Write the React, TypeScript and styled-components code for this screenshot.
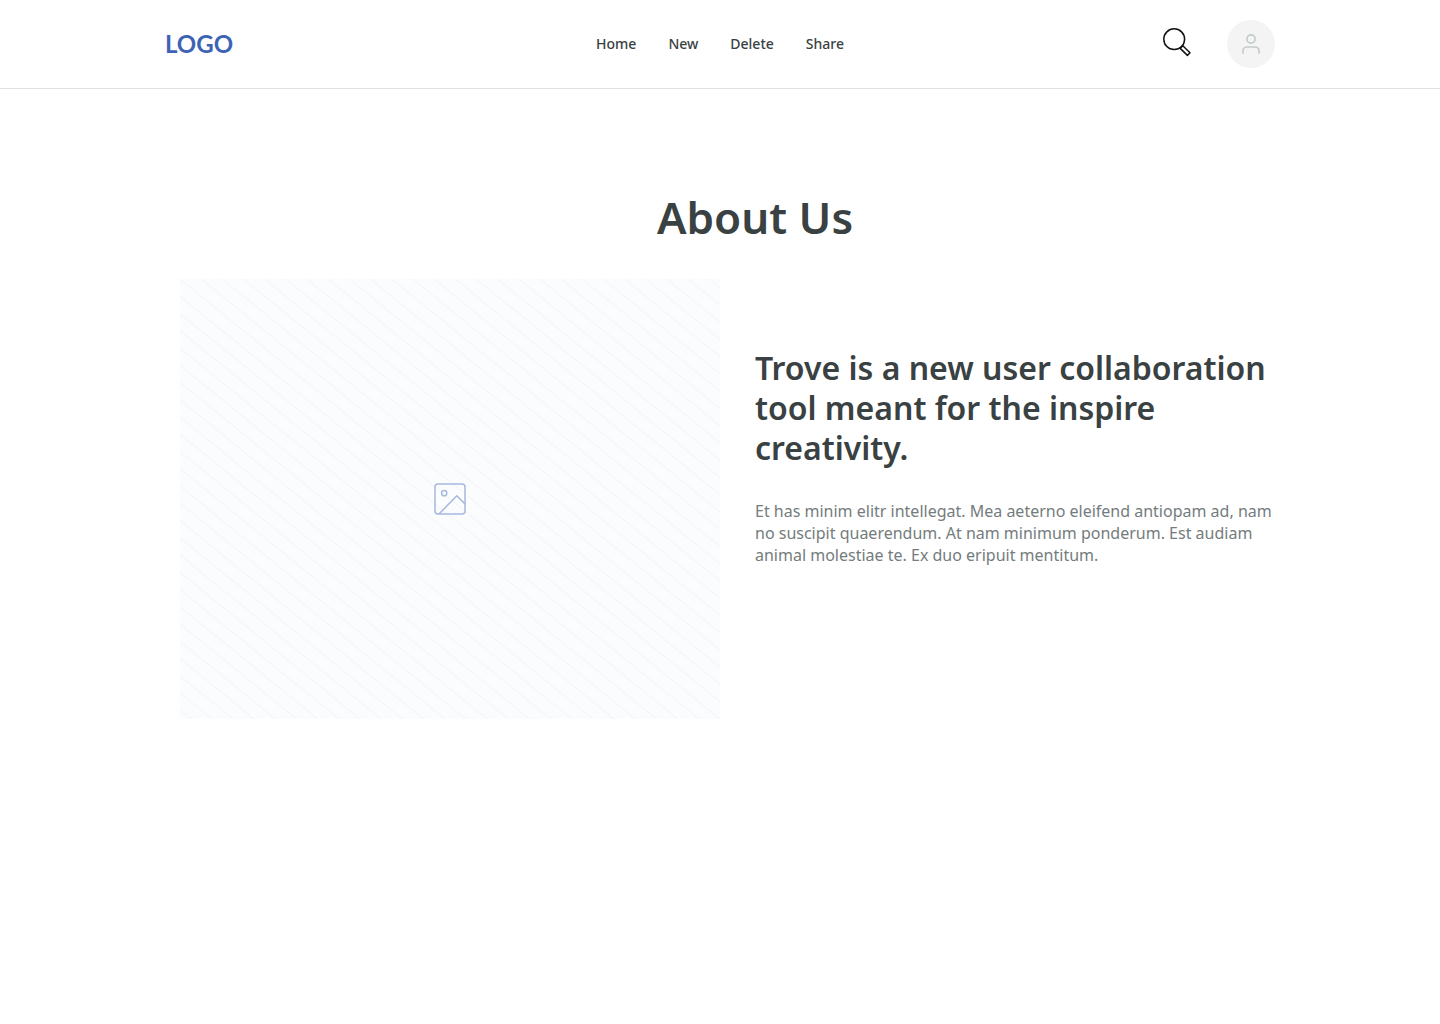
import React from "react";
import styled, { createGlobalStyle } from "styled-components";

const ink = "#394142";
const sans = `"Noto Sans", "Open Sans", sans-serif`;

const GlobalStyle = createGlobalStyle`
  *, *::before, *::after { box-sizing: border-box; }
  body { margin: 0; background: #fff; color: ${ink}; font-family: ${sans}; }
  h1, h2, p, ul { margin: 0; padding: 0; }
`;

const Header = styled.header`
  padding: 20px;
  border-bottom: 1px solid #dfe1e1;
`;

const HeaderInner = styled.div`
  display: grid;
  grid-template-columns: 1fr auto 1fr;
  align-items: center;
  max-width: 1110px;
  margin: 0 auto;
`;

const Logo = styled.a`
  justify-self: start;
  font: 700 24px/32px Lato, sans-serif;
  color: #3d63b5;
  text-decoration: none;
`;

const NavList = styled.ul`
  display: flex;
  gap: 32px;
  list-style: none;
`;

const NavLink = styled.a`
  display: block;
  font-size: 14px;
  line-height: 20px;
  font-weight: 500;
  color: ${ink};
  text-decoration: none;
`;

const Actions = styled.div`
  display: flex;
  align-items: center;
  justify-content: flex-end;
  gap: 34px;
`;

const IconButton = styled.button<{ $size: number; $fill?: string }>`
  display: flex;
  align-items: center;
  justify-content: center;
  width: ${(p) => p.$size}px;
  height: ${(p) => p.$size}px;
  padding: 0;
  border: 0;
  border-radius: 50%;
  background: ${(p) => p.$fill ?? "transparent"};
  cursor: pointer;
`;

const Main = styled.main`
  padding: 100px 0 80px 70px;
`;

const Content = styled.div`
  max-width: 1150px;
  margin: 0 auto;
`;

const Title = styled.h1`
  font-size: 44px;
  line-height: 56px;
  font-weight: 600;
  text-align: center;
`;

const Columns = styled.div`
  display: grid;
  grid-template-columns: 540fr 575fr;
  gap: 35px;
  margin-top: 34px;
`;

const Placeholder = styled.div`
  display: grid;
  place-items: center;
  height: 440px;
  background: #fbfcfe;
  overflow: hidden;

  > svg { grid-area: 1 / 1; }
`;

const Copy = styled.div`
  max-width: 540px;
  padding-top: 69px;
`;

const Lead = styled.h2`
  font-size: 32px;
  line-height: 40px;
  font-weight: 600;
`;

const Body = styled.p`
  max-width: 530px;
  margin-top: 32px;
  font-size: 16px;
  line-height: 22px;
  color: #747c7d;
`;

const SearchIcon = () => (
  <svg width="32" height="32" viewBox="0 0 32 32" fill="none" stroke="#111" strokeWidth="1.5" strokeLinejoin="round" aria-hidden="true">
    <circle cx="13.2" cy="11.2" r="10.4" />
    <path d="M19.2 20.4 L21.8 17.8 L29 24.8 L26.4 27.4 Z" />
  </svg>
);

const UserIcon = () => (
  <svg width="24" height="24" viewBox="0 0 24 24" fill="none" stroke="#c3cccd" strokeWidth="1.7" strokeLinecap="round" aria-hidden="true">
    <circle cx="12" cy="7" r="4.1" />
    <path d="M4 21v-2a4 4 0 0 1 4-4h8a4 4 0 0 1 4 4v2" />
  </svg>
);

const hatchStep = 17.25;
const hatchLines = Array.from({ length: 51 }, (_, i) => (i - 25) * hatchStep);

const Hatch = () => (
  <svg width="100%" height="440" viewBox="0 0 540 440" preserveAspectRatio="none" aria-hidden="true">
    <g stroke="#f2f3f5" strokeWidth="1">
      {hatchLines.map((y) => (
        <line key={y} x1="0" y1={y} x2="540" y2={y + 440} />
      ))}
    </g>
  </svg>
);

const ImageIcon = () => (
  <svg width="32" height="32" viewBox="0 0 32 32" fill="none" stroke="#a6b8de" strokeWidth="1.5" strokeLinejoin="round" aria-hidden="true">
    <rect x="1" y="1" width="30" height="30" rx="3" />
    <circle cx="10.2" cy="10.2" r="2.6" />
    <path d="M5 31 L22.8 12.8 L31 21" />
  </svg>
);

const links = ["Home", "New", "Delete", "Share"];

export default function App() {
  return (
    <>
      <GlobalStyle />
      <Header>
        <HeaderInner>
          <Logo href="#">LOGO</Logo>
          <nav>
            <NavList>
              {links.map((label) => (
                <li key={label}>
                  <NavLink href="#">{label}</NavLink>
                </li>
              ))}
            </NavList>
          </nav>
          <Actions>
            <IconButton type="button" aria-label="Search" $size={32}>
              <SearchIcon />
            </IconButton>
            <IconButton type="button" aria-label="Account" $size={48} $fill="#f4f4f4">
              <UserIcon />
            </IconButton>
          </Actions>
        </HeaderInner>
      </Header>
      <Main>
        <Content>
          <Title>About Us</Title>
          <Columns>
            <Placeholder>
              <Hatch />
              <ImageIcon />
            </Placeholder>
            <Copy>
              <Lead>Trove is a new user collaboration tool meant for the inspire creativity.</Lead>
              <Body>
                Et has minim elitr intellegat. Mea aeterno eleifend antiopam ad, nam no suscipit quaerendum. At nam
                minimum ponderum. Est audiam animal molestiae te. Ex duo eripuit mentitum.
              </Body>
            </Copy>
          </Columns>
        </Content>
      </Main>
    </>
  );
}
